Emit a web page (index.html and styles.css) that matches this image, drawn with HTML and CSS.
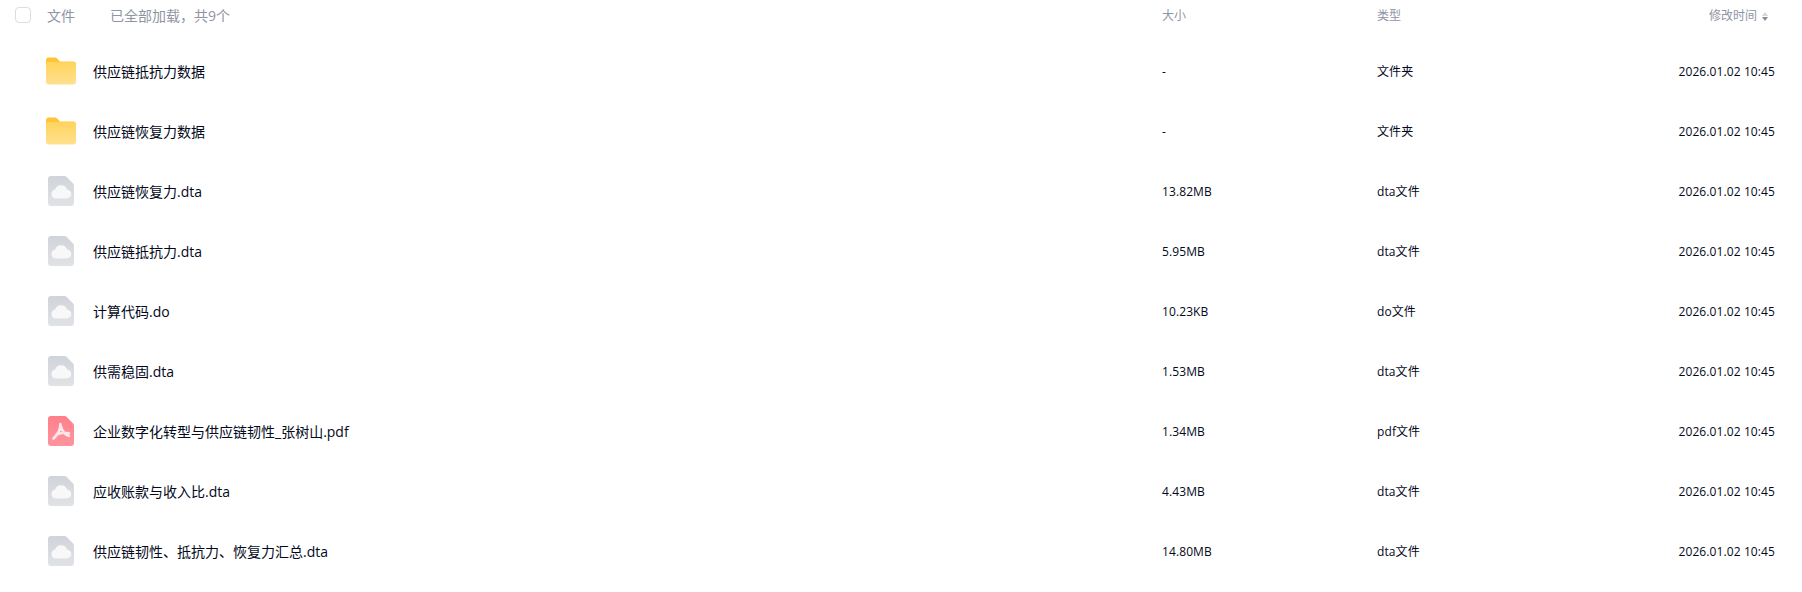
FILE: index.html
```html
<!DOCTYPE html>
<html lang="zh-CN">
<head>
    <meta charset="UTF-8">
    <meta name="viewport" content="width=device-width, initial-scale=1.0">
    <title>文件列表</title>
    <link rel="stylesheet" href="styles.css">
</head>
<body>
    <svg class="icon-defs" width="0" height="0" aria-hidden="true">
        <defs>
            <linearGradient id="folder-back" x1="0" y1="0" x2="0" y2="1">
                <stop offset="0" stop-color="#ffc233"/>
                <stop offset="1" stop-color="#ffc94d"/>
            </linearGradient>
            <linearGradient id="folder-front" x1="0" y1="0" x2="0" y2="1">
                <stop offset="0" stop-color="#ffd45c"/>
                <stop offset="1" stop-color="#ffe08f"/>
            </linearGradient>
            <linearGradient id="file-grey" x1="0" y1="0" x2="0" y2="1">
                <stop offset="0" stop-color="#d0d3d9"/>
                <stop offset="1" stop-color="#e0e2e6"/>
            </linearGradient>
            <linearGradient id="file-red" x1="0" y1="0" x2="0" y2="1">
                <stop offset="0" stop-color="#ff7f8c"/>
                <stop offset="1" stop-color="#ff949e"/>
            </linearGradient>
            <symbol id="icon-folder" viewBox="0 0 30 27">
                <path d="M0 3a3 3 0 0 1 3-3h5.500c1.500 0 2.300.6 3.200 1.500L14 4H27a3 3 0 0 1 3 3v5H0z" fill="url(#folder-back)"/>
                <path d="M0 6.500a2 2 0 0 1 2-2h26a2 2 0 0 1 2 2V24a3 3 0 0 1-3 3H3a3 3 0 0 1-3-3z" fill="url(#folder-front)"/>
            </symbol>
            <symbol id="icon-file" viewBox="0 0 26 30">
                <path d="M3 0h13.500c.8 0 1.500.3 2 .8l6.600 6.700c.6.500.9 1.200.9 2V27a3 3 0 0 1-3 3H3a3 3 0 0 1-3-3V3a3 3 0 0 1 3-3z" fill="url(#file-grey)"/>
                <path d="M8 22.500a4.500 4.500 0 0 1-.9-8.900 6.300 6.300 0 0 1 11.900-.1 4.500 4.500 0 0 1-.5 9z" fill="#f8f8f9"/>
            </symbol>
            <symbol id="icon-pdf" viewBox="0 0 26 30">
                <path d="M3 0h13.500c.8 0 1.500.3 2 .8l6.600 6.700c.6.500.9 1.200.9 2V27a3 3 0 0 1-3 3H3a3 3 0 0 1-3-3V3a3 3 0 0 1 3-3z" fill="url(#file-red)"/>
                <path d="M12.300 8c.6 3.400 1.900 6.600 3.700 8.700 1.400 1.700 3.200 2.900 5 3.300M12.300 8c.4 4.500-2.700 10.500-6.800 14.500M8.500 18.500c3.500-1.600 7.500-2.200 12.500-1.300" fill="none" stroke="#fde6e8" stroke-width="2.600" stroke-linecap="round"/>
            </symbol>
        </defs>
    </svg>

    <div class="file-list">
        <!-- 表头 -->
        <div class="list-head">
            <div class="head-name">
                <span class="checkbox"></span>
                <span class="head-title">文件</span>
                <span class="head-count">已全部加载，共9个</span>
            </div>
            <div>大小</div>
            <div>类型</div>
            <div class="col-time">修改时间<span class="sort-arrows"><i class="up"></i><i class="down"></i></span></div>
        </div>

        <!-- 文件行 -->
        <div class="list-row">
            <div class="row-name"><svg class="icon icon-wide"><use href="#icon-folder"/></svg><span>供应链抵抗力数据</span></div>
            <div>-</div>
            <div>文件夹</div>
            <div class="col-time">2026.01.02 10:45</div>
        </div>
        <div class="list-row">
            <div class="row-name"><svg class="icon icon-wide"><use href="#icon-folder"/></svg><span>供应链恢复力数据</span></div>
            <div>-</div>
            <div>文件夹</div>
            <div class="col-time">2026.01.02 10:45</div>
        </div>
        <div class="list-row">
            <div class="row-name"><svg class="icon"><use href="#icon-file"/></svg><span>供应链恢复力.dta</span></div>
            <div>13.82MB</div>
            <div>dta文件</div>
            <div class="col-time">2026.01.02 10:45</div>
        </div>
        <div class="list-row">
            <div class="row-name"><svg class="icon"><use href="#icon-file"/></svg><span>供应链抵抗力.dta</span></div>
            <div>5.95MB</div>
            <div>dta文件</div>
            <div class="col-time">2026.01.02 10:45</div>
        </div>
        <div class="list-row">
            <div class="row-name"><svg class="icon"><use href="#icon-file"/></svg><span>计算代码.do</span></div>
            <div>10.23KB</div>
            <div>do文件</div>
            <div class="col-time">2026.01.02 10:45</div>
        </div>
        <div class="list-row">
            <div class="row-name"><svg class="icon"><use href="#icon-file"/></svg><span>供需稳固.dta</span></div>
            <div>1.53MB</div>
            <div>dta文件</div>
            <div class="col-time">2026.01.02 10:45</div>
        </div>
        <div class="list-row">
            <div class="row-name"><svg class="icon"><use href="#icon-pdf"/></svg><span>企业数字化转型与供应链韧性_张树山.pdf</span></div>
            <div>1.34MB</div>
            <div>pdf文件</div>
            <div class="col-time">2026.01.02 10:45</div>
        </div>
        <div class="list-row">
            <div class="row-name"><svg class="icon"><use href="#icon-file"/></svg><span>应收账款与收入比.dta</span></div>
            <div>4.43MB</div>
            <div>dta文件</div>
            <div class="col-time">2026.01.02 10:45</div>
        </div>
        <div class="list-row">
            <div class="row-name"><svg class="icon"><use href="#icon-file"/></svg><span>供应链韧性、抵抗力、恢复力汇总.dta</span></div>
            <div>14.80MB</div>
            <div>dta文件</div>
            <div class="col-time">2026.01.02 10:45</div>
        </div>
    </div>
</body>
</html>
```

FILE: styles.css
```css
/* CSS Reset */
* {
    margin: 0;
    padding: 0;
    box-sizing: border-box;
}

body {
    font-family: "Open Sans", "Noto Sans CJK SC", sans-serif;
    font-size: 12px;
    color: #03081a;
    background-color: #fff;
    height: 592px;
    overflow: hidden;
}

.icon-defs {
    display: block;
    height: 0;
}

/* Table columns */
.list-head, .list-row {
    display: grid;
    grid-template-columns: 1162px 215px 1fr 100px;
    padding-right: 27px;
    align-items: center;
}

/* Header */
.list-head {
    height: 41px;
    padding-bottom: 11px;
    color: #8f94a3;
}

.head-name {
    display: flex;
    align-items: center;
    padding-left: 15px;
}

.checkbox {
    width: 16px;
    height: 16px;
    border: 1px solid #dcdde1;
    border-radius: 4px;
}

.head-title {
    font-size: 14px;
    margin-left: 16px;
    width: 63px;
}

.head-count {
    font-size: 14px;
}

.col-time {
    text-align: right;
    white-space: nowrap;
}

.list-head .col-time {
    padding-right: 7px;
}

.sort-arrows {
    display: inline-block;
    width: 6px;
    margin-left: 5px;
    vertical-align: -1px;
}

.sort-arrows i {
    display: block;
    width: 0;
    height: 0;
    border-left: 3px solid transparent;
    border-right: 3px solid transparent;
}

.sort-arrows .up {
    border-bottom: 4px solid #d4d6dc;
    margin-bottom: 1px;
}

.sort-arrows .down {
    border-top: 4px solid #878c9c;
}

/* Rows */
.list-row {
    height: 60px;
    letter-spacing: .1px;
}

.row-name {
    display: flex;
    align-items: center;
    font-size: 14px;
    padding-left: 46px;
    letter-spacing: 0;
}

.icon {
    width: 30px;
    height: 30px;
    padding: 0 2px;
    margin-right: 17px;
}

.icon-wide {
    padding: 0;
}
```
